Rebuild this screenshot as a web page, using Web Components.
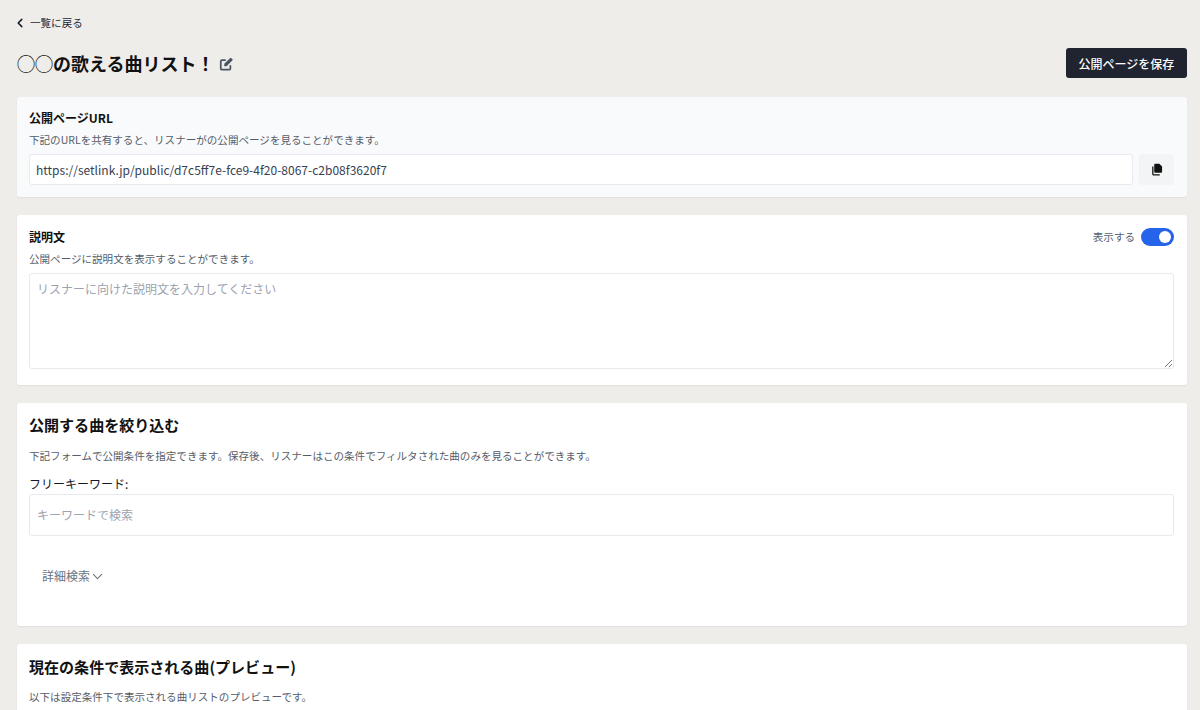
<!DOCTYPE html>
<html lang="ja"><head><meta charset="utf-8">
<style>
html,body{margin:0;padding:0;height:710px;overflow:hidden;background:#eeede9;}
body{font-family:"Noto Sans CJK JP","Noto Sans",sans-serif;color:#111827;}
</style></head><body>
<app-page></app-page>
<template id="t-page"><style>
:host{display:flex;flex-direction:column;padding:0 13px 0 17px;gap:18px;width:1170px}
.top{display:flex;flex-direction:column}
.head{display:flex;justify-content:space-between;align-items:center;margin-top:17px;margin-bottom:1px}
</style>
<div class="top"><back-link>一覧に戻る</back-link>
<div class="head"><page-title>◯◯の歌える曲リスト！</page-title><app-button>公開ページを保存</app-button></div></div>
<app-card tone="gray" style="height:100px">
<card-head>公開ページURL</card-head><card-desc>下記のURLを共有すると、リスナーがの公開ページを見ることができます。</card-desc>
<url-row>https://setlink.jp/public/d7c5ff7e-fce9-4f20-8067-c2b08f3620f7</url-row></app-card>
<app-card style="height:170px">
<card-head style="margin-top:1px">説明文<app-toggle slot="side">表示する</app-toggle></card-head><card-desc>公開ページに説明文を表示することができます。</card-desc>
<text-area>リスナーに向けた説明文を入力してください</text-area></app-card>
<app-card style="height:223px">
<section-title style="margin-top:-1px">公開する曲を絞り込む</section-title><card-desc style="margin-top:12px">下記フォームで公開条件を指定できます。保存後、リスナーはこの条件でフィルタされた曲のみを見ることができます。</card-desc>
<field-label>フリーキーワード:</field-label><text-input>キーワードで検索</text-input><more-link>詳細検索</more-link></app-card>
<app-card style="height:120px">
<section-title>現在の条件で表示される曲(プレビュー)</section-title><card-desc style="margin-top:11px">以下は設定条件下で表示される曲リストのプレビューです。</card-desc></app-card>
</template>
<script>
function def(name,html){customElements.define(name,class extends HTMLElement{constructor(){super();this.attachShadow({mode:'open'}).innerHTML=html;}});}
customElements.define('app-page',class extends HTMLElement{constructor(){super();this.attachShadow({mode:'open'}).appendChild(document.getElementById('t-page').content.cloneNode(true));}});
def('back-link',`<style>:host{display:flex;align-items:center;gap:3px;padding-top:15px;height:16px;font-size:10.56px;line-height:16px;color:#1f2937}svg{width:12px;height:12px;flex:none}
</style><svg viewBox="0 0 12 12" fill="none" stroke="#111827" stroke-width="1.5" stroke-linecap="round" stroke-linejoin="round" style="margin-left:-3px;margin-right:1px"><path d="M7.8 2.4 4.2 6l3.6 3.6"/></svg><slot></slot>`);
def('page-title',`<style>:host{display:flex;align-items:center;gap:5px;font-size:18px;font-weight:700;line-height:30px;color:#111}svg{width:14px;height:14px;margin-top:1px}</style><span><slot></slot></span><svg viewBox="0 0 16 16" fill="none" stroke="#4b5563" stroke-width="2" stroke-linecap="round" stroke-linejoin="round"><path d="M13 10v3a1.500 1.500 0 0 1-1.500 1.500h-8A1.500 1.500 0 0 1 2 13V5a1.500 1.500 0 0 1 1.500-1.500H7"/><path fill="#4b5563" stroke="none" d="M6 10.500V7.800L12.500 1.300a1.100 1.100 0 0 1 1.600 0l1.100 1.100a1.100 1.100 0 0 1 0 1.600L8.700 10.500z"/></svg>`);
def('app-button',`<style>:host{display:flex;align-items:center;justify-content:center;box-sizing:border-box;width:121px;height:30px;background:#1f2430;border-radius:3px;color:#fff;font-size:12px;font-weight:500}</style><slot></slot>`);
def('app-card',`<style>:host{display:block;box-sizing:border-box;padding:12px 13px 12px 12px;background:#fff;border-radius:3px;box-shadow:0 1px 2px rgba(0,0,0,.06)}:host([tone=gray]){background:#f9fafb}</style><slot></slot>`);
def('card-head',`<style>:host{display:flex;justify-content:space-between;align-items:center;height:18px;font-size:12px;font-weight:700;line-height:18px;color:#111}</style><span><slot></slot></span><slot name="side"></slot>`);
def('card-desc',`<style>:host{display:block;margin-top:5px;font-size:10.56px;line-height:16px;color:#555d6a}</style><slot></slot>`);
def('url-row',`<style>:host{display:flex;gap:6px;margin-top:6px}.i{flex:1;box-sizing:border-box;height:31px;padding:0 6px;background:#fff;border:1px solid #e8eaf0;border-radius:3px;font-size:12.03px;line-height:29px;color:#374151}.b{width:35px;height:31px;display:flex;align-items:center;justify-content:center;background:#f3f4f6;border-radius:3px}svg{width:12px;height:13px}</style><div class="i"><slot></slot></div><div class="b"><svg viewBox="0 0 13 14"><path fill="#111" d="M4.500 .8h4.500l3 3v5.700a1 1 0 0 1-1 1H4.500a1 1 0 0 1-1-1V1.800a1 1 0 0 1 1-1z"/><path fill="none" stroke="#111" stroke-width="1.400" d="M2 3.800v8a1 1 0 0 0 1 1h6.500"/></svg></div>`);
def('app-toggle',`<style>:host{display:flex;align-items:center;gap:6px;font-size:10.56px;font-weight:400;color:#555d6a}.t{width:33px;height:18px;border-radius:9px;background:#2563eb;position:relative}.t::after{content:"";position:absolute;right:3px;top:3px;width:12px;height:12px;border-radius:50%;background:#fff}</style><slot></slot><div class="t"></div>`);
def('text-area',`<style>:host{display:block;box-sizing:border-box;position:relative;height:96px;margin-top:6px;padding:6px 7px;border:1px solid #e8eaf0;border-radius:3px;font-size:12px;line-height:18px;color:#9ca3af;background:#fff}svg{position:absolute;right:0;bottom:0;width:9px;height:9px}</style><slot></slot><svg viewBox="0 0 9 9" stroke="#777" stroke-width="1"><path d="M8 1 1 8M8 5 5 8"/></svg>`);
def('section-title',`<style>:host{display:block;font-size:15.04px;font-weight:700;line-height:22px;color:#111}</style><slot></slot>`);
def('field-label',`<style>:host{display:block;margin-top:12px;font-size:12px;font-weight:400;line-height:16px;color:#111827}</style><slot></slot>`);
def('text-input',`<style>:host{display:block;box-sizing:border-box;height:42px;margin-top:2px;padding:0 7px;border:1px solid #e8eaf0;border-radius:3px;font-size:12px;line-height:40px;color:#9ca3af;background:#fff}</style><slot></slot>`);
def('more-link',`<style>:host{display:flex;align-items:center;gap:2px;margin:31px 0 0 13px;font-size:12px;line-height:18px;color:#6b7280}svg{width:11px;height:11px}</style><slot></slot><svg viewBox="0 0 12 12" fill="none" stroke="#6b7280" stroke-width="1.200" stroke-linecap="round" stroke-linejoin="round"><path d="M1.500 3.800 6 8.300l4.500-4.500"/></svg>`);
</script>
</body></html>
